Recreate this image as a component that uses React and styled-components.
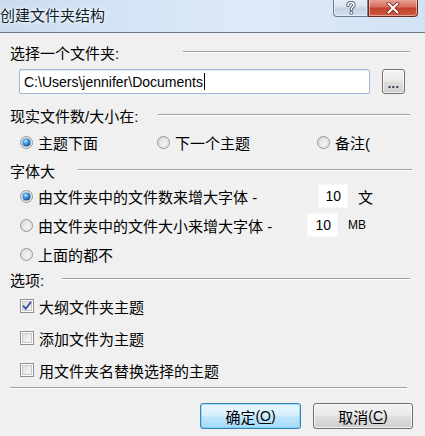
import React from "react";
import styled, { createGlobalStyle } from "styled-components";

const Global = createGlobalStyle`
  html, body { margin: 0; padding: 0; background: #f0f0f0; }
  body { width: 425px; height: 436px; overflow: hidden; }
  * { box-sizing: border-box; }
`;

const FONT = `"Liberation Sans", "Noto Sans CJK SC", sans-serif`;

const Window = styled.div`
  width: 425px;
  height: 436px;
  background: #f0f0f0;
  font-family: ${FONT};
  font-size: 15px;
  color: #000;
  display: flex;
  flex-direction: column;
`;

const TitleBar = styled.div`
  height: 33px;
  display: flex;
  align-items: flex-start;
  border-bottom: 1px solid #6b7888;
  background: linear-gradient(90deg, #c9dcf0 0%, #d6e6f6 35%, #dde9f6 60%, #d2e3f4 100%);
`;

const Title = styled.div`
  height: 32px;
  line-height: 31px;
  font-size: 15px;
  color: #101c2c;
  text-shadow: 0 0 6px #fff, 0 0 3px #fff;
`;

const Captions = styled.div`
  margin-left: auto;
  margin-right: 7px;
  display: flex;
`;

const CapBtn = styled.div`
  width: ${(p) => p.$w}px;
  height: 18px;
  margin-top: -1px;
  display: flex;
  align-items: center;
  justify-content: center;
  border: 1px solid ${(p) => (p.$close ? "#6e2a22" : "#6d7b8e")};
  border-top: none;
  border-radius: ${(p) => (p.$close ? "0 0 4px 0" : "0 0 0 4px")};
  background: ${(p) =>
    p.$close
      ? "linear-gradient(180deg, #e8a99c 0%, #d7705f 45%, #c3432d 55%, #cf5a43 100%)"
      : "linear-gradient(180deg, #e8eef6 0%, #d8e2ee 45%, #c5d2e2 55%, #d3deeb 100%)"};
  box-shadow: inset 0 0 0 1px rgba(255, 255, 255, 0.45);
`;

const Body = styled.div`
  flex: 1;
  display: flex;
  flex-direction: column;
  padding: 9px 12px 0 10px;
`;

const Header = styled.div`
  height: 20px;
  display: flex;
  align-items: center;
  margin-top: ${(p) => p.$mt || 0}px;
  white-space: nowrap;
`;

const HeaderLine = styled.div`
  flex: 1;
  margin-left: ${(p) => p.$gap}px;
  margin-right: ${(p) => p.$mr || 3}px;
  height: 2px;
  border-top: 1px solid #a0a0a0;
  border-bottom: 1px solid #ffffff;
`;

const PathRow = styled.div`
  display: flex;
  align-items: center;
  margin-top: 7px;
  padding-left: 9px;
`;

const PathInput = styled.div`
  width: 351px;
  height: 25px;
  border: 1px solid #9fbad8;
  border-radius: 2px;
  background: #fff;
  display: flex;
  align-items: center;
  padding-left: 4px;
  font-size: 14px;
  box-shadow: inset 0 1px 0 #e3ecf6;
`;

const Caret = styled.span`
  display: inline-block;
  width: 1px;
  height: 17px;
  background: #000;
  margin-left: 1px;
`;

const BrowseBtn = styled.div`
  width: 23px;
  height: 25px;
  margin-left: 12px;
  border: 1px solid #707070;
  border-radius: 3px;
  background: linear-gradient(180deg, #f4f4f4 0%, #ebebeb 45%, #dddddd 55%, #cfcfcf 100%);
  display: flex;
  align-items: flex-end;
  justify-content: center;
  padding-bottom: 4px;
  font-size: 12px;
  line-height: 10px;
  letter-spacing: 0.5px;
  color: #1b2a44;
  font-weight: bold;
  box-shadow: inset 0 0 0 1px rgba(255, 255, 255, 0.7);
`;

const RadioGrid = styled.div`
  display: grid;
  grid-template-columns: 137px 160px auto;
  margin-top: 7px;
  padding-left: 10px;
  height: 20px;
  align-items: center;
`;

const Option = styled.label`
  display: flex;
  align-items: center;
  gap: 5px;
  height: ${(p) => p.$h || 20}px;
  white-space: nowrap;
`;

const OptionList = styled.div`
  display: flex;
  flex-direction: column;
  gap: ${(p) => p.$gap}px;
  margin-top: ${(p) => p.$mt}px;
  padding-left: 10px;
`;

const LabelText = styled.span`
  display: inline-block;
  width: ${(p) => (p.$w ? `${p.$w}px` : "auto")};
`;

const NumBox = styled.div`
  width: ${(p) => p.$w}px;
  height: 24px;
  background: #fff;
  border: 1px solid #f7f7f7;
  display: flex;
  align-items: center;
  justify-content: flex-end;
  padding-right: 6px;
  font-size: 14px;
`;

const Unit = styled.span`
  margin-left: 5px;
  font-size: ${(p) => p.$size}px;
`;

const Separator = styled.div`
  height: 2px;
  margin-top: 7px;
  margin-right: 6px;
  border-top: 1px solid #a0a0a0;
  border-bottom: 1px solid #fff;
`;

const ButtonRow = styled.div`
  display: flex;
  justify-content: flex-end;
  gap: 12px;
  margin-top: 14px;
`;

const DlgButton = styled.div`
  width: ${(p) => p.$w}px;
  height: 26px;
  border: 1px solid ${(p) => (p.$primary ? "#3c7fb1" : "#707070")};
  border-radius: 3px;
  display: flex;
  align-items: center;
  justify-content: center;
  font-size: 15px;
  background: ${(p) =>
    p.$primary
      ? "linear-gradient(180deg, #eaf6fd 0%, #d9f0fc 45%, #bee6fd 55%, #a7d9f5 100%)"
      : "linear-gradient(180deg, #f2f2f2 0%, #ebebeb 45%, #dddddd 55%, #cfcfcf 100%)"};
  box-shadow: inset 0 0 0 1px ${(p) => (p.$primary ? "#48cffa80" : "#ffffffb0")};
`;

const Acc = styled.span`
  font-size: 14px;
  u { text-decoration: underline; text-underline-offset: 2px; }
`;

const Radio = ({ checked }) => (
  <svg width="13" height="13" viewBox="0 0 13 13" style={{ flex: "none" }}>
    <defs>
      <linearGradient id="rbg" x1="0" y1="0" x2="1" y2="1">
        <stop offset="0" stopColor="#dcdcdc" />
        <stop offset="1" stopColor="#fdfdfd" />
      </linearGradient>
      <radialGradient id="rdot" cx="0.4" cy="0.35" r="0.7">
        <stop offset="0" stopColor="#c4ebff" />
        <stop offset="0.45" stopColor="#3a96e0" />
        <stop offset="1" stopColor="#0f4a8e" />
      </radialGradient>
    </defs>
    <circle cx="6.5" cy="6.5" r="6" fill="url(#rbg)" stroke="#949494" strokeWidth="1" />
    <circle cx="6.5" cy="6.5" r="4.6" fill="none" stroke="#d6d6d6" strokeWidth="1" />
    {checked && <circle cx="6.5" cy="6.5" r="4" fill="url(#rdot)" />}
  </svg>
);

const Check = ({ checked }) => (
  <svg width="14" height="14" viewBox="0 0 14 14" style={{ flex: "none" }}>
    <defs>
      <linearGradient id="cbg" x1="0" y1="0" x2="1" y2="1">
        <stop offset="0" stopColor="#dcdcdc" />
        <stop offset="1" stopColor="#fafafa" />
      </linearGradient>
    </defs>
    <rect x="0.5" y="0.5" width="13" height="13" fill="#fff" stroke="#8e8f8f" />
    <rect x="2.5" y="2.5" width="9" height="9" fill="url(#cbg)" stroke="#c8c8c8" />
    {checked && (
      <path d="M3.5 7.2 L5.8 9.8 L10.6 3.4" fill="none" stroke="#3a52a4" strokeWidth="1.8" strokeLinecap="round" strokeLinejoin="round" />
    )}
  </svg>
);

export default function App() {
  return (
    <Window>
      <Global />
      <TitleBar>
        <Title>创建文件夹结构</Title>
        <Captions>
          <CapBtn $w={35}>
            <svg width="12" height="14" viewBox="0 0 12 14">
              <path d="M3 4.5 C3 2 4.5 1.5 6 1.5 C8 1.5 9 2.6 9 4 C9 6 6.3 6 6.3 8.5" fill="none" stroke="#4b5668" strokeWidth="3.2" strokeLinecap="round" />
              <path d="M3 4.5 C3 2 4.5 1.5 6 1.5 C8 1.5 9 2.6 9 4 C9 6 6.3 6 6.3 8.5" fill="none" stroke="#fff" strokeWidth="1.5" strokeLinecap="round" />
              <circle cx="6.3" cy="11.8" r="1.6" fill="#fff" stroke="#4b5668" strokeWidth="0.9" />
            </svg>
          </CapBtn>
          <CapBtn $w={50} $close>
            <svg width="14" height="12" viewBox="0 0 14 12">
              <path d="M2.5 1.5 L11.5 10.5 M11.5 1.5 L2.5 10.5" stroke="#7a2419" strokeWidth="3.6" strokeLinecap="round" />
              <path d="M2.5 1.5 L11.5 10.5 M11.5 1.5 L2.5 10.5" stroke="#fff" strokeWidth="2" strokeLinecap="round" />
            </svg>
          </CapBtn>
        </Captions>
      </TitleBar>

      <Body>
        <Header>
          选择一个文件夹:
          <HeaderLine $gap={64} $mr={0} />
        </Header>
        <PathRow>
          <PathInput>
            C:\Users\jennifer\Documents
            <Caret />
          </PathInput>
          <BrowseBtn>...</BrowseBtn>
        </PathRow>

        <Header $mt={11}>
          现实文件数/大小在:
          <HeaderLine $gap={20} />
        </Header>
        <RadioGrid>
          <Option>
            <Radio checked />
            主题下面
          </Option>
          <Option>
            <Radio />
            下一个主题
          </Option>
          <Option>
            <Radio />
            备注(
          </Option>
        </RadioGrid>

        <Header $mt={8}>
          字体大
          <HeaderLine $gap={23} $mr={1} />
        </Header>
        <OptionList $gap={5} $mt={4}>
          <Option $h={24}>
            <Radio checked />
            <LabelText $w={275}>由文件夹中的文件数来增大字体 -</LabelText>
            <NumBox $w={30}>10</NumBox>
            <Unit $size={15}>文</Unit>
          </Option>
          <Option $h={24}>
            <Radio />
            <LabelText $w={264}>由文件夹中的文件大小来增大字体 -</LabelText>
            <NumBox $w={31}>10</NumBox>
            <Unit $size={12}>MB</Unit>
          </Option>
          <Option $h={24}>
            <Radio />
            上面的都不
          </Option>
        </OptionList>

        <Header $mt={3}>
          选项:
          <HeaderLine $gap={18} />
        </Header>
        <OptionList $gap={12} $mt={7}>
          <Option>
            <Check checked />
            大纲文件夹主题
          </Option>
          <Option>
            <Check />
            添加文件为主题
          </Option>
          <Option>
            <Check />
            用文件夹名替换选择的主题
          </Option>
        </OptionList>

        <Separator />

        <ButtonRow>
          <DlgButton $w={101} $primary>
            确定<Acc>(<u>O</u>)</Acc>
          </DlgButton>
          <DlgButton $w={100}>
            取消<Acc>(<u>C</u>)</Acc>
          </DlgButton>
        </ButtonRow>
      </Body>
    </Window>
  );
}
